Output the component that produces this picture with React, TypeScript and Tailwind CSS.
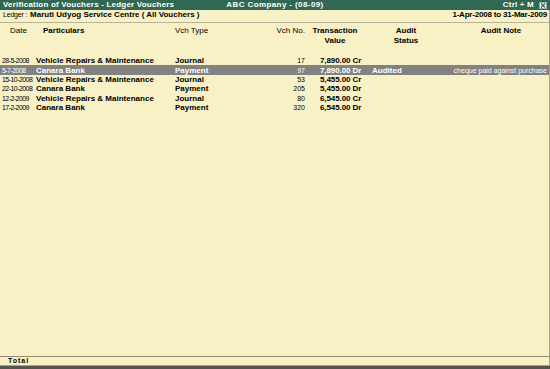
import React from 'react';

type Row = {
  date: string;
  party: string;
  type: string;
  no: string;
  value: string;
  status?: string;
  note?: string;
  active?: boolean;
};

const rows: Row[] = [
  { date: '28-5-2008', party: 'Vehicle Repairs & Maintenance', type: 'Journal', no: '17', value: '7,890.00 Cr' },
  { date: '5-7-2008', party: 'Canara Bank', type: 'Payment', no: '97', value: '7,890.00 Dr', status: 'Audited', note: 'cheque paid against purchase', active: true },
  { date: '15-10-2008', party: 'Vehicle Repairs & Maintenance', type: 'Journal', no: '53', value: '5,455.00 Cr' },
  { date: '22-10-2008', party: 'Canara Bank', type: 'Payment', no: '205', value: '5,455.00 Dr' },
  { date: '12-2-2009', party: 'Vehicle Repairs & Maintenance', type: 'Journal', no: '80', value: '6,545.00 Cr' },
  { date: '17-2-2009', party: 'Canara Bank', type: 'Payment', no: '320', value: '6,545.00 Dr' },
];

const App: React.FC = () => {
  return (
    <div className="w-[550px] h-[369px] flex flex-col bg-[#f9f1c6] text-black font-['Liberation_Sans',Arial,sans-serif] overflow-hidden">
      {/* Title bar */}
      <div className="h-[10px] bg-[#2f6853] text-white text-[8px] font-bold leading-[10px] flex items-center relative pl-[3px] pr-[3px] tracking-[0.2px]">
        <span>Verification of Vouchers - Ledger Vouchers</span>
        <span className="absolute left-1/2 -translate-x-1/2 tracking-[0.4px]">ABC Company - (08-09)</span>
        <span className="ml-auto mr-[5px]">Ctrl + M</span>
        <span className="w-[8px] h-[7px] bg-[#f5f5f0] border border-[#9aa] flex items-center justify-center">
          <svg width="6" height="5" viewBox="0 0 6 5">
            <path d="M1 0.5 L5 4.5 M5 0.5 L1 4.5" stroke="#2f6853" strokeWidth="1.1" />
          </svg>
        </span>
      </div>

      <div className="flex-1 flex flex-col border-r border-[#a8a48a]">
        {/* Ledger line */}
        <div className="h-[13px] flex items-end justify-between pl-[3px] pr-[2px] pb-[1px] border-b border-[#b8b29a]">
          <div className="flex items-baseline gap-[3px]">
            <span className="text-[7px] tracking-[-0.2px]">Ledger :</span>
            <span className="text-[8px] font-bold">Maruti Udyog Service Centre ( All Vouchers )</span>
          </div>
          <span className="text-[8px] font-bold tracking-[-0.2px]">1-Apr-2008 to 31-Mar-2009</span>
        </div>

        {/* Column headers */}
        <div className="flex pl-[2px] pt-[3px] text-[8px] leading-[10px]">
          <div className="w-[34px] pl-[8px] font-normal">Date</div>
          <div className="w-[139px] pl-[7px] font-bold">Particulars</div>
          <div className="w-[80px] font-normal">Vch Type</div>
          <div className="w-[50px] text-right">Vch No.</div>
          <div className="w-[60px] text-center font-bold flex flex-col">
            <span>Transaction</span>
            <span>Value</span>
          </div>
          <div className="w-[80px] text-center font-bold flex flex-col pl-[2px]">
            <span>Audit</span>
            <span>Status</span>
          </div>
          <div className="flex-1 text-center font-bold pl-[8px]">Audit Note</div>
        </div>

        {/* Rows */}
        <div className="flex flex-col pt-[10px]">
          {rows.map((r) => (
            <div
              key={r.date}
              className={`h-[9.35px] flex items-center pl-[2px] pr-[2px] text-[8px] leading-[9px] ${r.active ? 'bg-[#828282] text-white' : ''}`}
            >
              <div className="w-[34px] text-[7px] tracking-[-0.55px] whitespace-nowrap">{r.date}</div>
              <div className="w-[139px] font-bold whitespace-nowrap">{r.party}</div>
              <div className="w-[80px] font-bold">{r.type}</div>
              <div className="w-[50px] text-right text-[7px]">{r.no}</div>
              <div className="w-[65px] pl-[15px] font-bold whitespace-nowrap tracking-[-0.1px]">{r.value}</div>
              <div className="w-[70px] pl-[2px] font-bold">{r.status}</div>
              <div className="flex-1 text-right text-[7px] whitespace-nowrap">{r.note}</div>
            </div>
          ))}
        </div>

        <div className="flex-1" />

        {/* Total bar */}
        <div className="h-[9px] border-t border-[#8e8a72] flex items-center pl-[8px] text-[7px] font-bold tracking-[1px]">
          Total
        </div>
      </div>
      <div className="h-[1px] bg-[#a8a48a]" />
      <div className="h-[3px] bg-[#555550]" />
    </div>
  );
};

export default App;
